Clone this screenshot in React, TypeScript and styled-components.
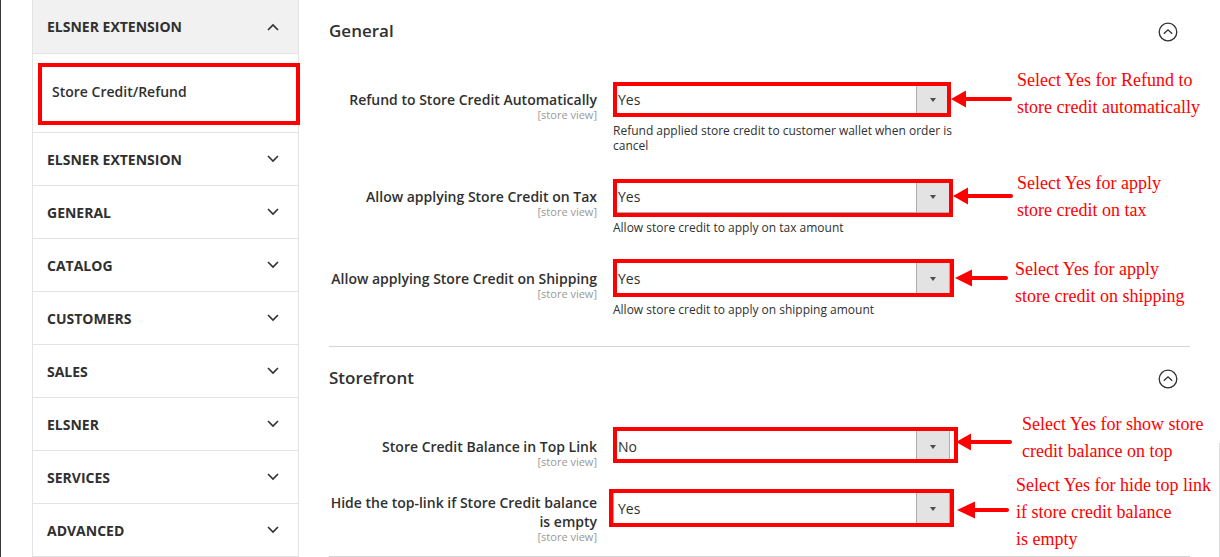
import React from 'react';
import styled, { createGlobalStyle } from 'styled-components';

const GlobalStyle = createGlobalStyle`
  html, body { margin: 0; padding: 0; background: #fff; }
  body { font-family: 'Open Sans', 'Liberation Sans', sans-serif; color: #303030; overflow: hidden; }
  * { box-sizing: border-box; }
`;

const Page = styled.div`
  position: relative;
  display: flex;
  align-items: flex-start;
  width: 1220px;
  height: 557px;
  overflow: hidden;
  border-left: 1px solid #3a3a3a;
  padding-left: 31px;
`;

const Sidebar = styled.nav`
  width: 267px;
  flex: none;
  border-left: 1px solid #e3e3e3;
  border-right: 1px solid #e3e3e3;
`;

const GroupHeader = styled.div<{ $open?: boolean }>`
  height: ${(p) => (p.$open ? 54 : 53)}px;
  display: flex;
  align-items: center;
  justify-content: space-between;
  padding: 0 19px 0 14px;
  background: ${(p) => (p.$open ? '#f1f1f1' : '#fff')};
  border-bottom: 1px solid #e3e3e3;
  font-size: 14px;
  font-weight: 700;
  color: #303030;
  text-transform: uppercase;
`;

const SubList = styled.div`
  position: relative;
  height: 79px;
  border-bottom: 1px solid #e3e3e3;
`;

const SubItem = styled.a`
  display: flex;
  align-items: center;
  height: 78px;
  padding: 0 0 4px 19px;
  font-size: 14px;
  font-weight: 600;
  color: #303030;
  text-decoration: none;
`;

const RedFrame = styled.div`
  position: absolute;
  border: 4px solid #ff0000;
  pointer-events: none;
`;

const Content = styled.main`
  flex: 1;
  padding: 0 30px 0 30px;
`;

const Section = styled.section`
  padding-bottom: 25px;
  border-bottom: 1px solid #d4d4d4;
`;

const SectionHeader = styled.div`
  height: 62px;
  display: flex;
  align-items: center;
  justify-content: space-between;
  padding-right: 12px;
`;

const SectionTitle = styled.h2`
  margin: -2px 0 0;
  font-size: 17px;
  font-weight: 600;
  color: #303030;
`;

const ToggleIcon = styled.svg`
  margin-top: 2px;
`;

const Rows = styled.div`
  margin-top: 21px;
  display: flex;
  flex-direction: column;
  gap: 23px;
`;

const Row = styled.div`
  display: grid;
  grid-template-columns: 268px 337px;
  column-gap: 16px;
  align-items: start;
`;

const Label = styled.div`
  padding-top: 7px;
  text-align: right;
  font-size: 14px;
  font-weight: 600;
  line-height: 19px;
  color: #303030;
`;

const Scope = styled.div`
  font-size: 11px;
  font-weight: 400;
  line-height: 11px;
  color: #999;
  margin-bottom: -11px;
`;

const Value = styled.div`
  align-self: center;
`;

const SelectBox = styled.div`
  position: relative;
  width: 337px;
  height: 33px;
  display: flex;
  align-items: center;
  border: 1px solid #adadad;
  background: #fff;
  padding-left: 4px;
  font-size: 14px;
  color: #303030;
`;

const DropButton = styled.span`
  margin-left: auto;
  width: 33px;
  height: 100%;
  display: flex;
  align-items: center;
  justify-content: center;
  background: #e3e3e3;
  border-left: 1px solid #adadad;
  &::after {
    content: '';
    border-left: 3.5px solid transparent;
    border-right: 3.5px solid transparent;
    border-top: 4px solid #514943;
  }
`;

const Note = styled.div`
  width: 360px;
  margin: 7px 0 4px;
  font-size: 12px;
  line-height: 15px;
  color: #303030;
`;

const Annotation = styled.div`
  position: absolute;
  font-family: 'Liberation Serif', 'Times New Roman', serif;
  font-size: 18px;
  line-height: 27px;
  color: #ff0000;
  white-space: nowrap;
`;

const ArrowSvg = styled.svg`
  position: absolute;
  overflow: visible;
`;

const EdgeLine = styled.div`
  position: absolute;
  left: 1218px;
  top: 443px;
  bottom: 0;
  width: 1px;
  background: #dcdcdc;
`;

const Chevron = ({ up }: { up?: boolean }) => (
  <svg width="12" height="8" viewBox="0 0 12 8">
    <polyline
      points={up ? '1,7 6,2 11,7' : '1,1 6,6 11,1'}
      fill="none"
      stroke="#303030"
      strokeWidth="1.6"
    />
  </svg>
);

const CircleToggle = () => (
  <ToggleIcon width="20" height="20" viewBox="0 0 20 20">
    <circle cx="10" cy="10" r="8.8" fill="none" stroke="#303030" strokeWidth="1.3" />
    <polyline points="5.8,11.8 10,7.8 14.2,11.8" fill="none" stroke="#303030" strokeWidth="1.3" />
  </ToggleIcon>
);

type Frame = { t: number; l: number; w: number; h: number };
type Field = { label: string; value: string; note?: string; frame: Frame };

const general: Field[] = [
  {
    label: 'Refund to Store Credit Automatically',
    value: 'Yes',
    note: 'Refund applied store credit to customer wallet when order is cancel',
    frame: { t: -1, l: 0, w: 338, h: 35 },
  },
  {
    label: 'Allow applying Store Credit on Tax',
    value: 'Yes',
    note: 'Allow store credit to apply on tax amount',
    frame: { t: -1, l: 0, w: 340, h: 38 },
  },
  {
    label: 'Allow applying Store Credit on Shipping',
    value: 'Yes',
    note: 'Allow store credit to apply on shipping amount',
    frame: { t: -3, l: 0, w: 341, h: 38 },
  },
];

const storefront: Field[] = [
  { label: 'Store Credit Balance in Top Link', value: 'No', frame: { t: -3, l: 0, w: 345, h: 36 } },
  {
    label: 'Hide the top-link if Store Credit balance is empty',
    value: 'Yes',
    frame: { t: -3, l: -4, w: 345, h: 38 },
  },
];

const navItems = ['ELSNER EXTENSION', 'GENERAL', 'CATALOG', 'CUSTOMERS', 'SALES', 'ELSNER', 'SERVICES', 'ADVANCED'];

const notes = [
  { left: 1016, top: 67, lines: ['Select Yes for Refund to', 'store credit automatically'] },
  { left: 1016, top: 170, lines: ['Select Yes for apply', 'store credit on tax'] },
  { left: 1014, top: 256, lines: ['Select Yes for apply', 'store credit on shipping'] },
  { left: 1021, top: 411, lines: ['Select Yes for show store', 'credit balance on top'] },
  { left: 1015, top: 472, lines: ['Select Yes for hide top link', 'if store credit balance', 'is empty'] },
];

const arrows = [
  { tip: 951, y: 98.5, base: 966, end: 1012 },
  { tip: 953, y: 195.5, base: 968, end: 1013 },
  { tip: 955, y: 277.5, base: 972, end: 1008 },
  { tip: 956, y: 442, base: 971, end: 1012 },
  { tip: 957, y: 510, base: 975, end: 1009 },
];

const FieldRow = ({ f }: { f: Field }) => (
  <Row>
    <Label>
      {f.label}
      <Scope>[store view]</Scope>
    </Label>
    <Value>
      <SelectBox>
        {f.value}
        <DropButton />
        <RedFrame style={{ top: f.frame.t - 1, left: f.frame.l - 1, width: f.frame.w, height: f.frame.h }} />
      </SelectBox>
      {f.note && <Note>{f.note}</Note>}
    </Value>
  </Row>
);

export default function App() {
  return (
    <>
      <GlobalStyle />
      <Page>
        <Sidebar>
          <GroupHeader $open>
            <span>ELSNER EXTENSION</span>
            <Chevron up />
          </GroupHeader>
          <SubList>
            <SubItem>Store Credit/Refund</SubItem>
            <RedFrame style={{ top: 9, left: 5, width: 262, height: 62 }} />
          </SubList>
          {navItems.map((n, i) => (
            <GroupHeader key={i}>
              <span>{n}</span>
              <Chevron />
            </GroupHeader>
          ))}
        </Sidebar>
        <Content>
          <Section>
            <SectionHeader>
              <SectionTitle>General</SectionTitle>
              <CircleToggle />
            </SectionHeader>
            <Rows>
              {general.map((f, i) => (
                <FieldRow key={i} f={f} />
              ))}
            </Rows>
          </Section>
          <Section>
            <SectionHeader>
              <SectionTitle>Storefront</SectionTitle>
              <CircleToggle />
            </SectionHeader>
            <Rows>
              {storefront.map((f, i) => (
                <FieldRow key={i} f={f} />
              ))}
            </Rows>
          </Section>
        </Content>
        {notes.map((n, i) => (
          <Annotation key={i} style={{ left: n.left, top: n.top }}>
            {n.lines.map((l, j) => (
              <div key={j}>{l}</div>
            ))}
          </Annotation>
        ))}
        {arrows.map((a, i) => {
          const w = a.end - a.tip;
          const hb = a.base - a.tip;
          return (
            <ArrowSvg
              key={i}
              width={w}
              height={20}
              viewBox={`0 0 ${w} 20`}
              style={{ left: a.tip - 1, top: a.y - 10 }}
            >
              <line x1={hb - 1} y1={10} x2={w - 2} y2={10} stroke="#ff0000" strokeWidth={4} strokeLinecap="round" />
              <polygon points={`0,10 ${hb},1.5 ${hb},18.5`} fill="#ff0000" />
            </ArrowSvg>
          );
        })}
        <EdgeLine />
      </Page>
    </>
  );
}
